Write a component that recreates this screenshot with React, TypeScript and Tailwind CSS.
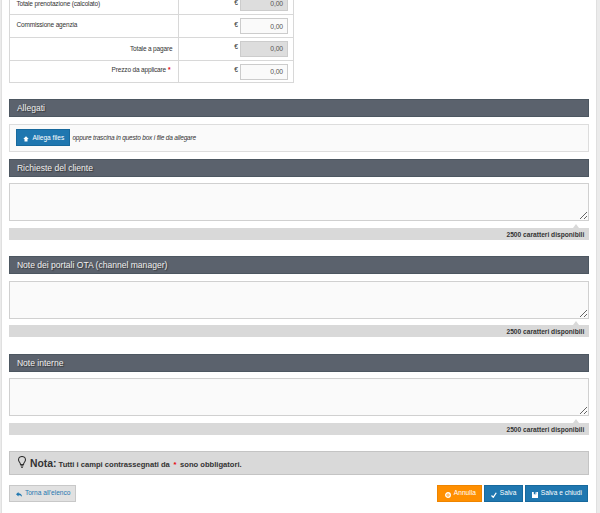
import type { ReactNode } from 'react';

import clsx from 'clsx';

type PriceRow = { label: string; value: string; disabled?: boolean; required?: boolean; align: 'left' | 'right' };

const PRICE_ROWS: PriceRow[] = [
  { label: 'Totale prenotazione (calcolato)', value: '0,00', disabled: true, align: 'left' },
  { label: 'Commissione agenzia', value: '0,00', align: 'left' },
  { label: 'Totale a pagare', value: '0,00', disabled: true, align: 'right' },
  { label: 'Prezzo da applicare', value: '0,00', required: true, align: 'right' },
];

const NOTE_SECTIONS = ['Richieste del cliente', 'Note dei portali OTA (channel manager)', 'Note interne'];

function UploadIcon() {
  return <svg viewBox="0 0 10 10" className="h-[6px] w-[6px]" fill="currentColor"><path d="M5 0.500 9.500 5H7.500v4H2.500V5H.5z" /></svg>;
}

function ReplyIcon() {
  return <svg viewBox="0 0 12 10" className="h-[5px] w-[6px]" fill="currentColor"><path d="M5 0v2.600C9 2.600 12 5 12 10 10.200 7.200 8 6.700 5 6.700V9L0 4.500z" /></svg>;
}

function CancelIcon() {
  return (
    <svg viewBox="0 0 12 12" className="h-[6px] w-[6px]" fill="none" stroke="currentColor">
      <circle cx="6" cy="6" r="4.500" strokeWidth="2.800" />
      <path d="m4.500 4.500 3 3m0-3-3 3" strokeWidth="1.200" />
    </svg>
  );
}

function CheckIcon() {
  return <svg viewBox="0 0 12 12" className="h-[6px] w-[6px]" fill="none" stroke="currentColor" strokeWidth="2.600"><path d="m1 7 3.500 3.500L10.500 1.500" /></svg>;
}

function SaveIcon() {
  return <svg viewBox="0 0 12 12" className="h-[6px] w-[6px]" fill="currentColor" fillRule="evenodd"><path d="M0 0h12v12H0zM3.500 0v4.500h5V0zM6.500 1h1.500v2.500H6.500z" /></svg>;
}

function BulbIcon() {
  return (
    <svg viewBox="0 0 16 24" className="mt-[4px] h-[12px] w-[8px] shrink-0" fill="none" stroke="#333" strokeWidth="2.200">
      <path d="M5 17c0-4-4-5-4-9.500C1 3.500 4 1 8 1s7 2.500 7 6.500C15 12 11 13 11 17z" />
      <path d="M5 19.500h6M6 22.500h4" />
    </svg>
  );
}

function SectionTitle({ children }: { children: ReactNode }) {
  return (
    <h3 className="h-[18px] border border-[#4d5761] bg-[#5b626d] pl-[6.500px] text-[8.550px] leading-[16px] text-[#f0f0f0] [text-shadow:1px_1px_1px_#333]">
      {children}
    </h3>
  );
}

function PriceTable() {
  return (
    <div className="mt-[-9.500px] w-[285px] border border-[#d8d8d8] text-[6.500px] leading-[8px] tracking-[-0.160px]">
      {PRICE_ROWS.map((row, i) => (
        <div key={row.label} className={clsx('flex h-[22.700px]', i > 0 && 'border-t border-[#d8d8d8]')}>
          <div className={clsx('w-[169px] border-r border-[#d8d8d8] px-[6px]', row.align === 'right' && 'text-right', i === 0 && 'pt-[8.500px]', i === 1 && 'pt-[6px]', i === 2 && 'pt-[7px]', i === 3 && 'pt-[5px]')}>
            {row.label}
            {row.required && <span className="mr-[2px] ml-[2px] font-bold text-red-600">*</span>}
          </div>
          <div className={clsx('flex flex-1 items-start justify-end gap-[2px] pr-[5.500px]', i === 0 ? 'pt-[3.500px]' : 'pt-[3px]')}>
            <span className={clsx('text-[6.800px]', i === 0 ? 'pt-[3.700px]' : 'pt-[2.500px]')}>€</span>
            <div className={clsx('h-[16px] w-[48px] border border-[#ccc] pt-[3.500px] pr-[4px] text-right text-[6.800px] text-[#555]', row.disabled ? 'bg-[#ddd]' : 'bg-[#fafafa]')}>
              {row.value}
            </div>
          </div>
        </div>
      ))}
    </div>
  );
}

function NoteSection({ title }: { title: string }) {
  return (
    <section className="h-[97.500px]">
      <SectionTitle>{title}</SectionTitle>
      <textarea aria-label={title} className="mt-[6.500px] block h-[38px] w-full resize border border-[#d0d0d0] bg-[#fafafa]" />
      <div className="relative mt-[6.500px] h-[12px] bg-[#d9d9d9] pr-[5px] text-right text-[6.650px] leading-[13px] font-bold">
        <span className="absolute -top-[4px] right-[10px] border-x-[3px] border-b-[4px] border-x-transparent border-b-[#d9d9d9]" />
        2500 caratteri disponibili
      </div>
    </section>
  );
}

const VARIANTS = {
  light: 'border-[#c8c8c8] bg-[#e1e1e1] text-[#1f77b0] pl-[5.500px] w-[67px]',
  orange: 'border-[#ee8500] bg-[#ff8f00] text-white pl-[6.500px] w-[44.500px]',
  blue: 'border-[#17699d] bg-[#1f77b0] text-white pl-[6px]',
};

function Button({ variant, icon, className, children }: { variant: keyof typeof VARIANTS; icon: ReactNode; className?: string; children: ReactNode }) {
  return (
    <button className={clsx('flex h-[17px] shrink-0 items-center gap-[3px] border text-[6.600px] leading-[8px] whitespace-nowrap', VARIANTS[variant], className)}>
      <span className="mt-[3px]">{icon}</span>
      <span>{children}</span>
    </button>
  );
}

export default function App() {
  return (
    <div className="h-[513px] overflow-hidden bg-[#ebebeb] pr-[3.500px] pl-px font-['Liberation_Sans',Arial,sans-serif] text-[#333]">
      <main className="flow-root h-full border-x border-[#e0e0e0] bg-white pr-[6.200px] pl-[7.400px]">
        <PriceTable />
        <div className="mt-[15.700px]">
          <SectionTitle>Allegati</SectionTitle>
        </div>
        <div className="mt-[6.800px] flex h-[28.200px] items-center gap-[2px] border border-[#ddd] bg-[#fafafa] pl-[6px]">
          <Button variant="blue" icon={<UploadIcon />} className="w-[54px]">Allega files</Button>
          <em className="text-[6.500px] tracking-[-0.190px]">oppure trascina in questo box i file da allegare</em>
        </div>
        <div className="mt-[6.900px]">
          {NOTE_SECTIONS.map((title) => <NoteSection key={title} title={title} />)}
        </div>
        <div className="flex h-[24px] border border-[#c4c4c4] bg-[#d9d9d9] pl-[8px] font-bold">
          <BulbIcon />
          <p className="ml-[3.500px] text-[7.600px] leading-[23px] whitespace-pre">
            <span className="text-[10.400px]">Nota:</span> Tutti i campi contrassegnati da <span className="px-[1.500px] text-red-600">*</span> sono obbligatori.
          </p>
        </div>
        <div className="mt-[9.200px] flex gap-[2px] pr-px">
          <Button variant="light" icon={<ReplyIcon />}>Torna all'elenco</Button>
          <div className="flex-1" />
          <Button variant="orange" icon={<CancelIcon />}>Annulla</Button>
          <Button variant="blue" icon={<CheckIcon />} className="w-[39px]">Salva</Button>
          <Button variant="blue" icon={<SaveIcon />} className="w-[63.500px]">Salva e chiudi</Button>
        </div>
      </main>
    </div>
  );
}
